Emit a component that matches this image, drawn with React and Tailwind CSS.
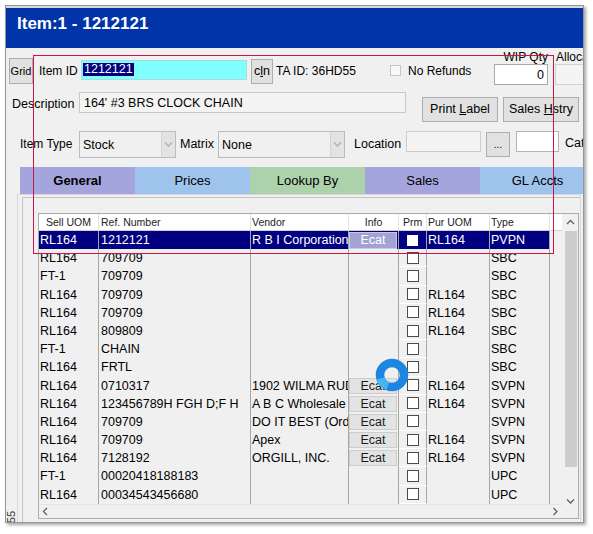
import React from "react";

const rows = [
  { uom: "RL164", ref: "1212121", vendor: "R B I Corporation", ecat: true, pur: "RL164", type: "PVPN", sel: true },
  { uom: "RL164", ref: "709709", type: "SBC" },
  { uom: "FT-1", ref: "709709", type: "SBC" },
  { uom: "RL164", ref: "709709", pur: "RL164", type: "SBC" },
  { uom: "RL164", ref: "709709", pur: "RL164", type: "SBC" },
  { uom: "RL164", ref: "809809", pur: "RL164", type: "SBC" },
  { uom: "FT-1", ref: "CHAIN", type: "SBC" },
  { uom: "RL164", ref: "FRTL", type: "SBC" },
  { uom: "RL164", ref: "0710317", vendor: "1902 WILMA RUDOLPH", ecat: true, pur: "RL164", type: "SVPN" },
  { uom: "RL164", ref: "123456789H FGH D;F H", vendor: "A B C Wholesale", ecat: true, pur: "RL164", type: "SVPN" },
  { uom: "RL164", ref: "709709", vendor: "DO IT BEST (Order Online)", ecat: true, type: "SVPN" },
  { uom: "RL164", ref: "709709", vendor: "Apex", ecat: true, pur: "RL164", type: "SVPN" },
  { uom: "RL164", ref: "7128192", vendor: "ORGILL, INC.", ecat: true, pur: "RL164", type: "SVPN" },
  { uom: "FT-1", ref: "00020418188183", type: "UPC" },
  { uom: "RL164", ref: "00034543456680", type: "UPC" },
];

const tabs = [
  { label: "General", bg: "bg-[#a5a5de]", bold: true },
  { label: "Prices", bg: "bg-[#9ec4ee]" },
  { label: "Lookup By", bg: "bg-[#abd2ab]" },
  { label: "Sales", bg: "bg-[#a5a5de]" },
  { label: "GL Accts", bg: "bg-[#9ec4ee]" },
];

function Btn({ className, children }) {
  return (
    <div
      className={`shrink-0 flex items-center justify-center whitespace-nowrap bg-[#e1e1e1] border border-[#adadad] text-black ${className}`}
    >
      {children}
    </div>
  );
}

function Chevron({ dir, color = "#606060" }) {
  const d = {
    up: "M1 5 L4.5 1.5 L8 5",
    down: "M1 1.5 L4.5 5 L8 1.5",
    left: "M5 1 L1.5 4.5 L5 8",
    right: "M1.5 1 L5 4.5 L1.5 8",
  }[dir];
  const vert = dir === "up" || dir === "down";
  return (
    <svg width={vert ? 9 : 7} height={vert ? 7 : 9} viewBox={vert ? "0 0 9 7" : "0 0 7 9"}>
      <path d={d} fill="none" stroke={color} strokeWidth="1.3" />
    </svg>
  );
}

function Select({ w, text }) {
  return (
    <div className={`${w} shrink-0 mt-[7px] h-[27px] border border-[#bcbcbc] bg-[#f0f0f0] flex`}>
      <div className="flex-1 pl-[3px] text-[12.5px] leading-[26px] whitespace-nowrap overflow-hidden">{text}</div>
      <div className="w-[14px] bg-[#e3e3e3] border-l border-[#d4d4d4] flex items-center justify-center">
        <Chevron dir="down" color="#b0b0b0" />
      </div>
    </div>
  );
}

function Row({ r }) {
  const sel = r.sel;
  return (
    <div
      className={`flex h-[18.2px] text-[12.5px] leading-[18px] whitespace-nowrap ${
        sel ? "text-white" : "text-black"
      }`}
    >
      <div className={`w-[60px] shrink-0 pl-[1px] border-r border-[#a6a6a6] overflow-hidden ${sel ? "bg-[#000080]" : ""}`}>
        {r.uom}
      </div>
      <div className={`w-[152px] shrink-0 pl-[2px] border-r border-[#a6a6a6] overflow-hidden ${sel ? "bg-[#000080]" : ""}`}>
        {r.ref}
      </div>
      <div className={`w-[98px] shrink-0 pl-[1px] border-r border-[#a6a6a6] overflow-hidden ${sel ? "bg-[#000080]" : ""}`}>
        {r.vendor || ""}
      </div>
      <div className={`w-[50px] shrink-0 border-r border-[#a6a6a6] overflow-hidden ${sel ? "bg-[#000080]" : ""}`}>
        {r.ecat &&
          (sel ? (
            <div className="w-[48px] h-[17px] mt-[0.5px] bg-[#a3a3d3] border border-[#c8c8e8] text-center leading-[15px] text-white">
              Ecat
            </div>
          ) : (
            <div className="w-[48px] h-[16px] mt-[1px] bg-[#e3e3e3] border border-[#cdcdcd] text-center leading-[14px] text-[#1a1a1a]">
              Ecat
            </div>
          ))}
      </div>
      <div
        className={`w-[28px] shrink-0 border-r border-[#a6a6a6] flex items-center justify-center ${
          sel ? "bg-[#000080]" : "border-b border-b-white"
        }`}
      >
        {sel ? (
          <div className="w-[11px] h-[11px] bg-white" />
        ) : (
          <div className="w-[12px] h-[12px] bg-white border border-[#4a4a4a]" />
        )}
      </div>
      <div className={`w-[63px] shrink-0 pl-[1px] border-r border-[#a6a6a6] overflow-hidden ${sel ? "bg-[#000080]" : ""}`}>
        {r.pur || ""}
      </div>
      <div className={`w-[60px] shrink-0 pl-[1px] border-r border-[#a6a6a6] overflow-hidden ${sel ? "bg-[#000080]" : ""}`}>
        {r.type}
      </div>
      <div className="flex-1" />
    </div>
  );
}

export default function App() {
  return (
    <div className="relative w-[593px] h-[534px] bg-white overflow-hidden font-['Liberation_Sans',Arial,sans-serif] text-black">
      <div className="ml-[5px] mt-[5px] w-[579px] h-[518px] border border-[#969696] bg-[#f0f0f0] shadow-[2px_2px_3px_rgba(0,0,0,0.35)] flex flex-col overflow-hidden">
        {/* Title bar */}
        <div className="h-[42px] shrink-0 border-t-2 border-[#d8d8d8] bg-[#0034a8] pl-[11px] pt-[6px] text-white font-bold text-[17px] leading-[20px]">
          Item:1 - 1212121
        </div>

        {/* Row 1 */}
        <div className="h-[36px] shrink-0 flex items-start">
          <Btn className="ml-[3px] mt-[10px] w-[24px] h-[26px] text-[11px]">Grid</Btn>
          <div className="shrink-0 ml-[6px] mt-[13px] w-[42px] h-[20px] leading-[20px] text-[12px] whitespace-nowrap">
            Item ID
          </div>
          <div className="shrink-0 mt-[12px] w-[166px] h-[20px] bg-[#80ffff] border border-[#a6dcdc] pl-[1px] pt-[2px] flex items-start">
            <span className="block bg-[#000080] text-white text-[12.5px] leading-[13px] px-[1px]">1212121</span>
          </div>
          <Btn className="ml-[4px] mt-[11px] w-[22px] h-[25px] text-[12.5px]">
            <span>
              c<span className="underline">l</span>n
            </span>
          </Btn>
          <div className="shrink-0 ml-[3px] mt-[13px] w-[114px] h-[20px] leading-[20px] text-[12px] whitespace-nowrap">
            TA ID: 36HD55
          </div>
          <div className="shrink-0 mt-[17px] w-[11px] h-[11px] border border-[#c6c6c6] bg-[#f8f8f8]" />
          <div className="shrink-0 ml-[7px] mt-[13px] w-[86px] h-[20px] leading-[20px] text-[12px] whitespace-nowrap">
            No Refunds
          </div>
          <div className="shrink-0 w-[54px] flex flex-col">
            <div className="mt-[3px] h-[12px] leading-[12px] text-[12px] text-right whitespace-nowrap">WIP Qty</div>
            <div className="mt-[1px] h-[21px] border border-[#a8a8a8] bg-white text-right pr-[3px] text-[12.5px] leading-[20px]">
              0
            </div>
          </div>
          <div className="shrink-0 ml-[7px] w-[70px] flex flex-col">
            <div className="mt-[3px] h-[12px] leading-[12px] text-[12px] pl-[1px] whitespace-nowrap">Allocated</div>
            <div className="mt-[1px] h-[21px] border border-[#d0d0d0] bg-[#f4f4f4]" />
          </div>
        </div>

        {/* Row 2 */}
        <div className="h-[40px] shrink-0 flex items-start">
          <div className="shrink-0 ml-[6px] mt-[8px] w-[67px] h-[21px] leading-[24px] text-[12.5px] whitespace-nowrap">
            Description
          </div>
          <div className="shrink-0 mt-[8px] w-[327px] h-[21px] border border-[#c8c8c8] bg-[#f4f4f4] pl-[4px] text-[12.5px] leading-[21px] whitespace-nowrap overflow-hidden">
            164' #3 BRS CLOCK CHAIN
          </div>
          <Btn className="ml-[16px] mt-[13px] w-[76px] h-[25px] text-[12.5px]">
            <span>
              Print <span className="underline">L</span>abel
            </span>
          </Btn>
          <Btn className="ml-[5px] mt-[13px] w-[76px] h-[25px] text-[12.5px]">
            <span>
              Sales <span className="underline">H</span>stry
            </span>
          </Btn>
        </div>

        {/* Row 3 */}
        <div className="h-[36px] shrink-0 flex items-start">
          <div className="shrink-0 ml-[14px] mt-[7px] w-[59px] h-[27px] leading-[27px] text-[12px] whitespace-nowrap">
            Item Type
          </div>
          <Select w="w-[97px]" text="Stock" />
          <div className="shrink-0 ml-[4px] mt-[7px] w-[38px] h-[27px] leading-[26px] text-[12.5px] whitespace-nowrap">
            Matrix
          </div>
          <Select w="w-[127px]" text="None" />
          <div className="shrink-0 ml-[9px] mt-[7px] w-[52px] h-[27px] leading-[26px] text-[12.5px] whitespace-nowrap">
            Location
          </div>
          <div className="shrink-0 mt-[7px] w-[75px] h-[21px] border border-[#cccccc] bg-[#f4f4f4]" />
          <Btn className="ml-[5px] mt-[8px] w-[24px] h-[25px] text-[10px] text-[#555]">...</Btn>
          <div className="shrink-0 ml-[6px] mt-[7px] w-[43px] h-[21px] border border-[#b4b4b4] bg-white" />
          <div className="shrink-0 ml-[6px] mt-[7px] h-[21px] leading-[24px] text-[12.5px] whitespace-nowrap">
            Category
          </div>
        </div>

        {/* Tabs */}
        <div className="ml-[14px] mt-[7px] h-[27px] shrink-0 flex">
          {tabs.map((t) => (
            <div
              key={t.label}
              className={`w-[115px] shrink-0 flex items-center justify-center text-[13px] ${t.bg} ${
                t.bold ? "font-bold" : ""
              }`}
            >
              {t.label}
            </div>
          ))}
        </div>

        {/* Lower area */}
        <div className="flex-1 min-h-0 flex">
          <div className="w-[11px] shrink-0 flex flex-col justify-end items-center">
            <span className="-rotate-90 translate-y-[1px] text-[11px] leading-[12px] text-[#333]">55</span>
          </div>
          <div className="w-[564px] shrink-0 border-l border-t border-r border-[#d8d8d8] pl-[4px] pt-[2px]">
            <div className="h-full border-l border-t border-[#c4c4c4] pl-[15px] pt-[15px]">
              {/* Grid */}
              <div className="w-[541px] h-[306px] border border-[#acacac] flex bg-[#f0f0f0]">
                <div className="w-[523px] shrink-0 flex flex-col">
                  <div className="h-[17px] shrink-0 flex bg-white border-b border-[#cfcfcf] text-[10.5px] leading-[17px] text-[#222] whitespace-nowrap">
                    <div className="w-[60px] shrink-0 text-center border-r border-[#e2e2e2]">Sell UOM</div>
                    <div className="w-[152px] shrink-0 pl-[2px] border-r border-[#e2e2e2]">Ref. Number</div>
                    <div className="w-[98px] shrink-0 pl-[1px] border-r border-[#e2e2e2]">Vendor</div>
                    <div className="w-[50px] shrink-0 text-center border-r border-[#e2e2e2]">Info</div>
                    <div className="w-[28px] shrink-0 text-center border-r border-[#e2e2e2]">Prm</div>
                    <div className="w-[63px] shrink-0 pl-[1px] border-r border-[#e2e2e2]">Pur UOM</div>
                    <div className="w-[60px] shrink-0 pl-[1px] border-r border-[#e2e2e2]">Type</div>
                    <div className="flex-1" />
                  </div>
                  <div className="h-[273px] shrink-0 flex flex-col">
                    {rows.map((r, i) => (
                      <Row key={i} r={r} />
                    ))}
                  </div>
                  <div className="h-[14px] shrink-0 border-t border-[#e4e4e4] flex items-center justify-between pl-[3px] pr-[3px]">
                    <Chevron dir="left" />
                    <Chevron dir="right" />
                  </div>
                </div>
                <div className="w-[16px] shrink-0 flex flex-col">
                  <div className="h-[17px] shrink-0 flex items-center justify-center pl-[1px]">
                    <Chevron dir="up" />
                  </div>
                  <div className="h-[236px] shrink-0 ml-[3px] w-[12px] bg-[#cdcdcd]" />
                  <div className="flex-1" />
                  <div className="h-[14px] shrink-0 flex items-center justify-center pl-[1px]">
                    <Chevron dir="down" />
                  </div>
                  <div className="h-[10px] shrink-0" />
                </div>
              </div>
            </div>
          </div>
        </div>
      </div>

      {/* Annotation rectangle */}
      <div className="pointer-events-none absolute left-[33px] top-[55px] w-[521px] h-[199px] border border-[#cc1447]" />

      {/* Click cursor ring */}
      <svg
        className="pointer-events-none absolute left-[375px] top-[358px] blur-[0.5px]"
        width="34"
        height="34"
        viewBox="0 0 34 34"
      >
        <circle cx="17" cy="17" r="12" fill="none" stroke="#1c86e2" strokeWidth="8.5" />
        <circle
          cx="17"
          cy="17"
          r="12"
          fill="none"
          stroke="#45b4f4"
          strokeWidth="8.5"
          strokeDasharray="11 65"
          strokeDashoffset="-23"
        />
      </svg>
    </div>
  );
}
